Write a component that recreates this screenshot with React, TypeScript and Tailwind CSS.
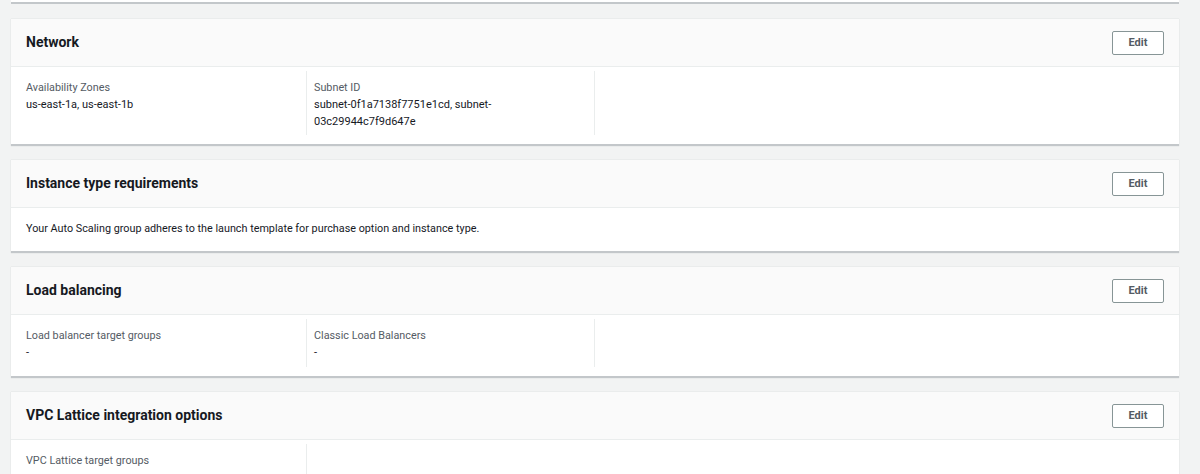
const font = "font-['Roboto',sans-serif]";

function Field({ label, lines, first }: { label: string; lines: string[]; first?: boolean }) {
  return (
    <div className={`shrink-0 border-r border-[#eaeded] ${first ? "w-[296px] pl-[15px]" : "w-[288px] pl-[7px]"}`}>
      <div className="pt-[8px] text-[10.8px] leading-[17px] text-[#545b64]">{label}</div>
      {lines.map((line) => (
        <div key={line} className="text-[11px] leading-[17px] text-[#16191f]">
          {line}
        </div>
      ))}
    </div>
  );
}

function Card({ title, children }: { title: string; children: React.ReactNode }) {
  return (
    <div className="bg-white border-b-2 border-[#c3c7ca] shadow-[0_0_1px_rgba(0,28,36,0.2)]">
      <div className="flex h-[48px] items-center justify-between border-b border-[#eaeded] bg-[#fafafa] px-[15px]">
        <h2 className="text-[14px] font-bold text-[#16191f]">{title}</h2>
        <button className="h-[24px] w-[52px] rounded-[2px] border border-[#879596] bg-white pt-px text-[11px] font-bold text-[#545b64]">
          Edit
        </button>
      </div>
      {children}
    </div>
  );
}

export default function App() {
  return (
    <div className={`${font} flex h-[474px] flex-col gap-[14px] overflow-hidden bg-[#f2f3f3] pl-[11px] pr-[21px]`}>
      <div className="mb-px h-[4px] shrink-0 bg-white border-b-2 border-[#c3c7ca]" />

      <Card title="Network">
        <div className="flex h-[77px] pt-[4px] pb-[9px]">
          <Field first label="Availability Zones" lines={["us-east-1a, us-east-1b"]} />
          <Field label="Subnet ID" lines={["subnet-0f1a7138f7751e1cd, subnet-", "03c29944c7f9d647e"]} />
        </div>
      </Card>

      <Card title="Instance type requirements">
        <div className="flex h-[43px] items-center px-[15px] pb-px text-[10.8px] text-[#16191f]">
          Your Auto Scaling group adheres to the launch template for purchase option and instance type.
        </div>
      </Card>

      <Card title="Load balancing">
        <div className="flex h-[61px] pt-[4px] pb-[9px]">
          <Field first label="Load balancer target groups" lines={["-"]} />
          <Field label="Classic Load Balancers" lines={["-"]} />
        </div>
      </Card>

      <Card title="VPC Lattice integration options">
        <div className="flex h-[60px] pt-[4px]">
          <Field first label="VPC Lattice target groups" lines={[]} />
        </div>
      </Card>
    </div>
  );
}
